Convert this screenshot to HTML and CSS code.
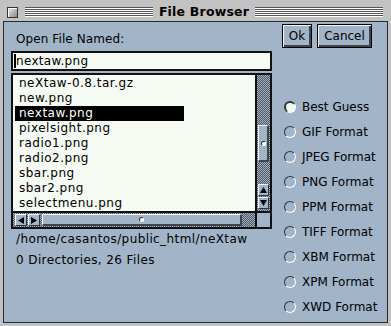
FILE: index.html
```html
<!DOCTYPE html>
<html lang="en">
<head>
  <meta charset="UTF-8" />
  <title>File Browser</title>
  <link rel="stylesheet" href="styles.css">
</head>
<body>
  <div class="window">
    <div class="titlebar">
      <span class="close-box"></span>
      <span class="ridge"></span>
      <span class="title">File Browser</span>
      <span class="ridge"></span>
    </div>

    <div class="dialog">
      <div class="main-col">
        <div class="prompt">Open File Named:</div>
        <div class="entry"><span class="caret"></span>nextaw.png</div>

        <div class="browser">
          <ul class="files">
            <li>neXtaw-0.8.tar.gz</li>
            <li>new.png</li>
            <li class="selected">nextaw.png</li>
            <li>pixelsight.png</li>
            <li>radio1.png</li>
            <li>radio2.png</li>
            <li>sbar.png</li>
            <li>sbar2.png</li>
            <li>selectmenu.png</li>
          </ul>
          <div class="vscroll">
            <div class="thumb thumb-v"><span class="grip"></span></div>
            <div class="arrows-v">
              <span class="arrow"><svg width="7" height="6" viewBox="0 0 7 6"><polygon points="3.5,0 7,6 0,6" /></svg></span>
              <span class="arrow"><svg width="7" height="6" viewBox="0 0 7 6"><polygon points="0,0 7,0 3.5,6" /></svg></span>
            </div>
          </div>
          <div class="hscroll">
            <span class="arrow"><svg width="6" height="7" viewBox="0 0 6 7"><polygon points="0,3.5 6,0 6,7" /></svg></span>
            <span class="arrow"><svg width="6" height="7" viewBox="0 0 6 7"><polygon points="0,0 6,3.5 0,7" /></svg></span>
            <div class="thumb thumb-h"><span class="grip"></span></div>
          </div>
          <div class="corner"></div>
        </div>

        <div class="info">/home/casantos/public_html/neXtaw</div>
        <div class="info">0 Directories, 26 Files</div>
      </div>

      <div class="side-col">
        <div class="buttons">
          <button class="btn btn-ok">Ok</button>
          <button class="btn btn-cancel">Cancel</button>
        </div>
        <div class="formats">
          <label class="radio"><span class="dot checked"></span>Best Guess</label>
          <label class="radio"><span class="dot"></span>GIF Format</label>
          <label class="radio"><span class="dot"></span>JPEG Format</label>
          <label class="radio"><span class="dot"></span>PNG Format</label>
          <label class="radio"><span class="dot"></span>PPM Format</label>
          <label class="radio"><span class="dot"></span>TIFF Format</label>
          <label class="radio"><span class="dot"></span>XBM Format</label>
          <label class="radio"><span class="dot"></span>XPM Format</label>
          <label class="radio"><span class="dot"></span>XWD Format</label>
        </div>
      </div>
    </div>
  </div>
</body>
</html>
```

FILE: styles.css
```css
body {
  margin: 0;
  background: #c2c2c2;
  font-family: 'DejaVu Sans', sans-serif;
  font-size: 12px;
  color: #000;
}

.window {
  width: 391px;
  height: 326px;
  display: flex;
  flex-direction: column;
  background: #c2c2c2;
}

/* title bar */
.titlebar {
  height: 21px;
  display: flex;
  align-items: center;
  padding: 0 8px 0 7px;
}

.close-box {
  width: 9px;
  height: 9px;
  border: 1px solid #333;
  background: linear-gradient(135deg, #e8e8e8, #8a8a8a);
  box-shadow: inset 1px 1px #fff;
  margin-right: 7px;
  margin-top: 3px;
}

.ridge {
  flex: 1;
  height: 10px;
  margin-top: 3px;
  background: repeating-linear-gradient(to bottom, #555 0 1px, #fff 1px 2px);
}

.title {
  font-weight: bold;
  font-size: 12.5px;
  padding: 2px 6px 0;
  letter-spacing: 0.2px;
}

/* dialog body */
.dialog {
  flex: 1;
  display: flex;
  margin: 0 3px 3px;
  border: 1px solid #2a2a2a;
  background: #a1b4c8;
}

.main-col {
  width: 261px;
  margin-left: 7px;
  padding-top: 10px;
}

.prompt {
  line-height: 15px;
  padding-left: 5px;
  margin-bottom: 4px;
  letter-spacing: 0.1px;
}

.entry {
  height: 20px;
  box-sizing: border-box;
  border: 2px solid #111;
  background: #f5faf3;
  display: flex;
  align-items: center;
  padding-left: 1px;
  margin-bottom: 2px;
  letter-spacing: 0.3px;
}

.caret {
  width: 2px;
  height: 14px;
  background: #000;
}

/* file list with scrollbars */
.browser {
  display: grid;
  grid-template-columns: 242px 13px;
  grid-template-rows: 136px 14px;
  gap: 2px;
  border: 2px solid #111;
  background: #111;
}

.files {
  list-style: none;
  margin: 0;
  padding: 1px 0 0;
  background: #f5faf3;
  overflow: hidden;
  letter-spacing: 0.5px;
}

.files li {
  width: 165px;
  line-height: 15px;
  height: 15px;
  margin-left: 2px;
  padding-left: 4px;
  white-space: nowrap;
}

.files li.selected {
  background: #000;
  color: #fff;
}

.vscroll,
.hscroll {
  background: repeating-conic-gradient(#4d5660 0 25%, #a1b4c8 0 50%) 0 0 / 2px 2px;
  display: flex;
}

.vscroll {
  flex-direction: column;
  align-items: center;
}

.hscroll {
  align-items: center;
  padding-left: 1px;
}

.thumb {
  box-sizing: border-box;
  background: #a1b4c8;
  border-top: 1px solid #f4f8fc;
  border-left: 1px solid #f4f8fc;
  border-right: 2px solid #3d4650;
  border-bottom: 2px solid #3d4650;
  display: flex;
  align-items: center;
  justify-content: center;
}

.thumb-v {
  width: 11px;
  height: 37px;
  margin-top: 50px;
}

.thumb-h {
  width: 200px;
  height: 12px;
  margin-left: 2px;
}

.grip {
  width: 3px;
  height: 3px;
  border-radius: 50%;
  background: #fff;
  border: 1px solid #333;
  border-right-color: #fff;
  border-bottom-color: #fff;
}

.arrows-v {
  margin-top: auto;
  margin-bottom: 2px;
  display: flex;
  flex-direction: column;
  gap: 1px;
}

.arrow {
  width: 11px;
  height: 12px;
  box-sizing: border-box;
  background: #a1b4c8;
  border-top: 1px solid #f4f8fc;
  border-left: 1px solid #f4f8fc;
  border-right: 1px solid #2e353d;
  border-bottom: 1px solid #2e353d;
  display: flex;
  align-items: center;
  justify-content: center;
}

.hscroll .arrow {
  width: 12px;
  margin-left: 1px;
}

.arrow svg {
  fill: #000;
}

.corner {
  background: #a1b4c8;
}

.info {
  line-height: 21px;
  padding-left: 5px;
  letter-spacing: 0.4px;
}

.info:first-of-type {
  margin-top: 4px;
}

/* right column */
.side-col {
  margin-left: 10px;
  padding-top: 2px;
}

.buttons {
  display: flex;
  gap: 5px;
}

.btn {
  height: 24px;
  box-sizing: border-box;
  font-family: 'DejaVu Sans', sans-serif;
  font-size: 12px;
  color: #000;
  background: #a1b4c8;
  border: 1px solid #000;
  box-shadow: inset 1px 1px #f4f8fc, inset -2px -2px #3d4650;
  padding: 0;
}

.btn-ok {
  width: 30px;
}

.btn-cancel {
  width: 55px;
}

.formats {
  margin-top: 46px;
  display: flex;
  flex-direction: column;
}

.radio {
  height: 25px;
  display: flex;
  align-items: center;
  gap: 6px;
  padding-left: 2px;
}

.dot {
  width: 12px;
  height: 12px;
  box-sizing: border-box;
  border-radius: 50%;
  border: 1px solid #2e353d;
  border-right-color: #fff;
  border-bottom-color: #fff;
}

.dot.checked {
  background: #f2f6f0;
  border-width: 2px 1px 1px 2px;
}
```
